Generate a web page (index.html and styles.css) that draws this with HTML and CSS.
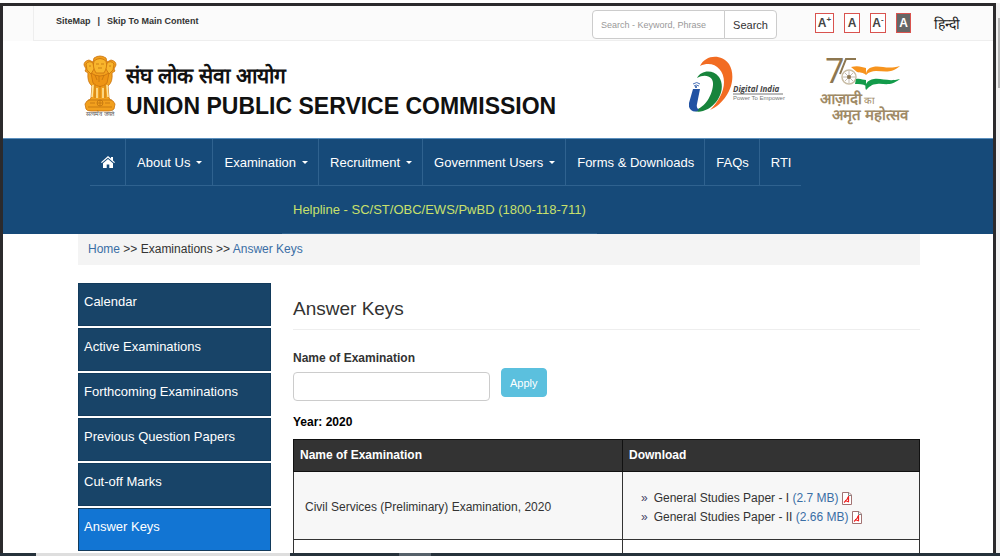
FILE: index.html
```
<!DOCTYPE html>
<html lang="en">
<head>
    <meta charset="UTF-8">
    <meta name="viewport" content="width=device-width, initial-scale=1.0">
    <title>Answer Keys | UPSC</title>
    <link rel="stylesheet" href="styles.css">
</head>
<body>
    <div class="screen">
        <div class="window">
            <div class="topbar">
                <div class="top-links">
                    <a href="#">SiteMap</a>
                    <span>|</span>
                    <a href="#main">Skip To Main Content</a>
                </div>
                <form class="search">
                    <input type="text" aria-label="Search" placeholder="Search - Keyword, Phrase">
                    <button type="button">Search</button>
                </form>
                <div class="font-tools">
                    <button type="button" class="larger">A<sup>+</sup></button>
                    <button type="button">A</button>
                    <button type="button">A<sup>-</sup></button>
                    <button type="button" class="contrast">A</button>
                </div>
                <a class="lang" href="#" lang="hi">हिन्दी</a>
            </div>

            <header class="header">
                <svg class="emblem" width="34" height="62" viewBox="0 0 34 62" aria-hidden="true">
                    <g fill="#f2a01d" stroke="#c9720c" stroke-width=".8">
                        <path d="M11 3q6-4 12 0l1 4 4-2q5 1 5 5l-2 4 1 2-3 2q1 9-4 13l1 12q1 2 4 3l2 3-1 5q-2 2-5 2H8q-4 0-5-2l-1-5 2-3q3-1 4-3l1-12q-5-4-4-13l-3-2 1-2-2-4q0-4 5-5l4 2z"/>
                        <path fill="#f8b52c" d="M11 6q6-5 12 0l1 6-3 6h-8l-3-6z"/>
                        <path fill="#f8b52c" d="M3 9q3-4 7-1l1 6-3 5-4-4zM31 9q-3-4-7-1l-1 6 3 5 4-4z"/>
                        <path d="M8 18q9 6 18 0l-2 10q-7 7-14 0z" fill="#ee9414"/>
                    </g>
                    <g fill="none" stroke="#ffe49a" stroke-width="1.6">
                        <path d="M10 30l-1 12M14 33v10M20 33v10M24 30l1 12"/>
                    </g>
                    <g fill="none" stroke="#c07510" stroke-width=".8">
                        <path d="M12 30v13M17 31v12M22 30v13M13 9h3M18 9h3M15 13h4M6 11h2M26 11h2M12 20l2 5M16 21v6M21 20l-2 5M5 45h24M5 52h24"/>
                        <circle cx="17" cy="48" r="3"/>
                        <path d="M7 48h5M22 48h5M17 45v6M14 48h6"/>
                    </g>
                    <text x="17" y="61" text-anchor="middle" class="motto">सत्यमेव जयते</text>
                </svg>
                <div class="site-name">
                    <div class="name-hi" lang="hi">संघ लोक सेवा आयोग</div>
                    <div class="name-en">UNION PUBLIC SERVICE COMMISSION</div>
                </div>
                <svg class="digital-india" width="98" height="58" viewBox="0 0 98 58" role="img" aria-label="Digital India">
                    <path fill="#f26c22" d="M11 10C16-1 32-3 40 8c9 15-1 38-19 46C29 46 35 36 35 26 35 13 24 4 11 10z"/>
                    <path fill="#17843b" d="M8 22c4-8 16-9 22-1 8 12-2 30-16 34-4 1-7 1-10-1 10 0 19-13 20-25 1-8-7-12-16-7z"/>
                    <path fill="#2152a3" d="M4 33h7L8 48q-1 4 2 6-4 3-8 0-3-3-2-7z"/>
                    <path d="M4 28q4-3 7 0M5 30q2-2 5 0" fill="none" stroke="#4a72b8"/>
                    <circle cx="7" cy="31" r="1" fill="#2152a3"/>
                    <text x="44" y="36" class="di-name">Digital India</text>
                    <path d="M44 38h50" stroke="#777" stroke-width="1"/>
                    <text x="44" y="44" class="di-sub">Power To Empower</text>
                </svg>
                <svg class="azadi" width="92" height="70" viewBox="0 0 92 70" role="img" aria-label="Azadi Ka Amrit Mahotsav">
                    <text x="5" y="28" class="seven">7</text>
                    <path d="M36 4H26l-6 15" fill="none" stroke="#8d7750" stroke-width="2"/>
                    <circle cx="29" cy="22" r="7" fill="#fff" stroke="#c9bda5" stroke-width="1.5"/>
                    <path d="M29 16v12M23 22h12M25 18l8 8M33 18l-8 8" stroke="#a99f90" stroke-width=".7"/>
                    <circle cx="29" cy="22" r="2" fill="#8d7750"/>
                    <path fill="#f7941e" d="M31 12c7-2 11 0 15 1v7c-3-3-6-2-9-3zM46 20c0-4 2-7 7-8 8-2 14 3 27-1-9 8-16 5-24 5-4 0-7 1-10 4z"/>
                    <path fill="#129b4a" d="M36 24c4-1 7 1 10 1v6c-3-2-7-2-11-2zM46 35c-2-5 1-10 8-11 8-1 14 3 26 0-10 8-16 4-23 5-5 0-8 3-11 6z"/>
                    <text x="0" y="49" class="azadi-text">आज़ादी<tspan dx="2" class="ka">का</tspan></text>
                    <text x="12" y="65" class="azadi-text">अमृत महोत्सव</text>
                </svg>
            </header>

            <nav class="nav">
                <ul class="menu">
                    <li><a href="#" aria-label="Home">
                        <svg width="14" height="12" viewBox="0 0 14 12" aria-hidden="true">
                            <path fill="#fff" d="M7 0l3 2.600V1h2v3.400L14 6.200l-.8.900L7 1.800.8 7.100 0 6.200zM7 3l5 4.200V12H8.300V8.500H5.700V12H2V7.200z"/>
                        </svg>
                    </a></li>
                    <li><a href="#">About Us <i class="caret"></i></a></li>
                    <li><a href="#">Examination <i class="caret"></i></a></li>
                    <li><a href="#">Recruitment <i class="caret"></i></a></li>
                    <li><a href="#">Government Users <i class="caret"></i></a></li>
                    <li><a href="#">Forms &amp; Downloads</a></li>
                    <li><a href="#">FAQs</a></li>
                    <li><a href="#">RTI</a></li>
                </ul>
                <a class="helpline" href="#">Helpline - SC/ST/OBC/EWS/PwBD (1800-118-711)</a>
            </nav>

            <div class="container">
                <div class="breadcrumb">
                    <a href="#">Home</a> &gt;&gt; Examinations &gt;&gt; <a href="#">Answer Keys</a>
                </div>
                <div class="columns">
                    <aside class="sidebar">
                        <a href="#">Calendar</a>
                        <a href="#">Active Examinations</a>
                        <a href="#">Forthcoming Examinations</a>
                        <a href="#">Previous Question Papers</a>
                        <a href="#">Cut-off Marks</a>
                        <a href="#" class="active">Answer Keys</a>
                    </aside>
                    <main id="main">
                        <h1>Answer Keys</h1>
                        <form class="filter">
                            <div class="field">
                                <label for="exam-name">Name of Examination</label>
                                <input type="text" id="exam-name">
                            </div>
                            <button type="button">Apply</button>
                        </form>
                        <h2>Year: 2020</h2>
                        <table>
                            <thead>
                                <tr><th class="exam-col">Name of Examination</th><th>Download</th></tr>
                            </thead>
                            <tbody>
                                <tr>
                                    <td>Civil Services (Preliminary) Examination, 2020</td>
                                    <td>
                                        <ul class="papers">
                                            <li>General Studies Paper - I <a href="#">(2.7 MB)
                                                <svg class="pdf" width="10" height="13" viewBox="0 0 10 13" aria-hidden="true">
                                                    <path d="M.5.5H7L9.500 3v9.500H.5z" fill="#fff" stroke="#a27272"/>
                                                    <path d="M6.500.5V3.500h3" fill="none" stroke="#888"/>
                                                    <path d="M2 10.500C4 9 6 7 6.500 4v5.500M3 8.500l4 1.500" fill="none" stroke="#e22" stroke-width="1.2"/>
                                                </svg></a></li>
                                            <li>General Studies Paper - II <a href="#">(2.66 MB)
                                                <svg class="pdf" width="10" height="13" viewBox="0 0 10 13" aria-hidden="true">
                                                    <path d="M.5.5H7L9.500 3v9.500H.5z" fill="#fff" stroke="#a27272"/>
                                                    <path d="M6.500.5V3.500h3" fill="none" stroke="#888"/>
                                                    <path d="M2 10.500C4 9 6 7 6.500 4v5.500M3 8.500l4 1.500" fill="none" stroke="#e22" stroke-width="1.2"/>
                                                </svg></a></li>
                                        </ul>
                                    </td>
                                </tr>
                                <tr><td></td><td></td></tr>
                            </tbody>
                        </table>
                    </main>
                </div>
            </div>
        </div>
        <div class="scrollbar"><div class="thumb"></div></div>
    </div>
    <div class="taskbar"><span class="search-box"></span><span class="task"></span></div>
</body>
</html>
```
FILE: styles.css
```
* {
    box-sizing: border-box;
}
body {
    margin: 0;
    height: 100vh;
    overflow: hidden;
    display: flex;
    flex-direction: column;
    background: #fff;
    color: #333;
    font-family: "Liberation Sans", Arial, sans-serif;
    font-size: 12px;
    line-height: 19px;
}
a {
    color: #3a6ea5;
    text-decoration: none;
}
button,
input {
    font-family: inherit;
}
ul {
    list-style: none;
    margin: 0;
    padding: 0;
}

/* browser frame */
.screen {
    flex: 1;
    min-height: 0;
    display: flex;
    padding-top: 3px;
}
.window {
    flex: 1;
    min-width: 0;
    overflow: hidden;
    border: 3px solid #2b2a2c;
    border-bottom: 0;
}
.scrollbar {
    width: 4px;
    padding: 15px 0 0 2px;
    background: #f1f1f1;
}
.thumb {
    height: 70px;
    background: #b5b5b5;
}
.taskbar {
    height: 3px;
    padding-left: 36px;
    display: flex;
    background: #26323b;
}
.search-box {
    width: 254px;
    background: #dedede;
}
.task {
    width: 32px;
    margin-left: 109px;
    background: #56616a;
}

/* top bar */
.topbar {
    height: 35px;
    display: flex;
    align-items: center;
    margin-left: 30px;
    padding-right: 33px;
    background: #fbfbfb;
    border-left: 1px solid #eee;
    border-bottom: 1px solid #eee;
    box-shadow: -30px 0 #fbfbfb;
}
.top-links {
    flex: 1;
    display: flex;
    gap: 7px;
    padding: 0 0 4px 22px;
    font-size: 9px;
    font-weight: bold;
}
.top-links a {
    color: #333;
}
.search {
    display: flex;
    width: 185px;
    height: 29px;
    align-self: flex-start;
    margin: 4px 38px 0 0;
}
.search input {
    flex: 1;
    min-width: 0;
    padding: 0 8px;
    border: 1px solid #ccc;
    border-radius: 4px 0 0 4px;
    background: #fff;
    font-size: 9px;
}
.search input::placeholder {
    color: #999;
}
.search button {
    width: 53px;
    margin-left: -1px;
    padding: 0;
    border: 1px solid #ccc;
    border-radius: 0 4px 4px 0;
    background: #fff;
    color: #333;
    font-size: 11px;
}
.font-tools {
    display: flex;
    gap: 10px;
    margin-right: 23px;
}
.font-tools button {
    display: flex;
    justify-content: center;
    align-items: center;
    width: 16px;
    height: 20px;
    padding: 0;
    border: 1px solid #d9534f;
    background: #fff;
    color: #444;
    font-size: 12px;
    font-weight: bold;
}
.font-tools .larger {
    width: 19px;
}
.font-tools .contrast {
    width: 15px;
    background: #666;
    color: #fff;
}
.font-tools sup {
    margin-bottom: 6px;
    font-size: 8px;
    line-height: 8px;
}
.lang {
    padding-top: 2px;
    color: #222;
    font-size: 14px;
}

/* header */
.header {
    height: 97px;
    display: flex;
    align-items: flex-start;
    padding: 14px 81px 0 80px;
}
.emblem {
    margin-right: 9px;
}
.motto {
    font-size: 6px;
    fill: #555;
}
.site-name {
    flex: 1;
    padding-top: 6px;
    color: #111;
}
.name-hi {
    font-size: 21px;
    line-height: 30px;
    font-weight: 600;
}
.name-en {
    font-size: 23px;
    line-height: 30px;
    font-weight: bold;
    white-space: nowrap;
}
.digital-india {
    margin: 1px 33px 0 0;
}
.di-name {
    font: italic bold 8px "Open Sans", sans-serif;
    fill: #444;
}
.di-sub {
    font: 6px "Liberation Sans", sans-serif;
    fill: #777;
}
.azadi {
    overflow: visible;
}
.seven {
    font: 34px "Open Sans", sans-serif;
    fill: #8d7750;
}
.azadi-text {
    font-size: 15px;
    font-weight: 600;
    fill: #a08a66;
}
.ka {
    font-size: 10px;
    font-weight: normal;
}

/* navigation */
.nav {
    display: flex;
    flex-direction: column;
    align-items: flex-start;
    padding-left: 87px;
    background: #164a79;
    border-top: 1px solid #5b8fbd;
}
.menu {
    display: flex;
    border-bottom: 1px solid #2f628f;
}
.menu li + li {
    border-left: 1px solid #2f628f;
}
.menu a {
    display: flex;
    align-items: center;
    height: 46px;
    padding: 0 10px 0 11px;
    color: #fff;
    font-size: 13px;
}
.caret {
    margin-left: 6px;
    border: 3px solid transparent;
    border-top-color: #fff;
    border-bottom: 0;
}
.helpline {
    margin-left: 192px;
    padding: 0 11px;
    border-bottom: 1px solid #2f628f;
    color: #c8e06c;
    font-size: 13px;
    line-height: 47px;
}

/* page */
.container {
    padding: 0 73px 0 75px;
}
.breadcrumb {
    padding: 6px 10px;
    background: #f4f4f4;
}
.columns {
    display: grid;
    grid-template-columns: 193px 1fr;
    gap: 22px;
    padding-top: 18px;
}
.sidebar {
    display: flex;
    flex-direction: column;
    gap: 2px;
}
.sidebar a {
    height: 43px;
    padding: 0 5px;
    border: 1px solid #123a5b;
    background: #184468;
    color: #fff;
    font-size: 13px;
    line-height: 36px;
}
.sidebar .active {
    background: #1275d3;
}
h1 {
    margin: 0 0 19px;
    padding: 12px 0 6px;
    border-bottom: 1px solid #eee;
    font-size: 19px;
    line-height: 28px;
    font-weight: normal;
}
.filter {
    display: flex;
    align-items: flex-end;
    gap: 11px;
}
.field {
    display: flex;
    flex-direction: column;
    gap: 4px;
    width: 197px;
    font-weight: bold;
}
.field input {
    height: 29px;
    border: 1px solid #ccc;
    border-radius: 4px;
}
.filter button {
    height: 29px;
    margin-bottom: 4px;
    padding: 0 8px;
    border: 1px solid #5bc0de;
    border-radius: 4px;
    background: #5bc0de;
    color: #fff;
    font-size: 11px;
}
h2 {
    margin: 12px 0 7px;
    color: #000;
    font-size: 12px;
    line-height: 19px;
}
table {
    width: 100%;
    table-layout: fixed;
    border-collapse: collapse;
}
th {
    height: 32px;
    padding: 0 6px;
    border: 1px solid #111;
    background: #333;
    color: #fff;
    text-align: left;
}
.exam-col {
    width: 329px;
}
td {
    height: 68px;
    padding: 4px 11px 0;
    border: 1px solid #333;
    background: #f7f7f7;
}
tr + tr td {
    background: #fff;
}
.papers {
    padding-left: 7px;
}
.papers li::before {
    content: "»";
    margin-right: 6px;
    color: #446;
}
.pdf {
    vertical-align: -3px;
}
```
